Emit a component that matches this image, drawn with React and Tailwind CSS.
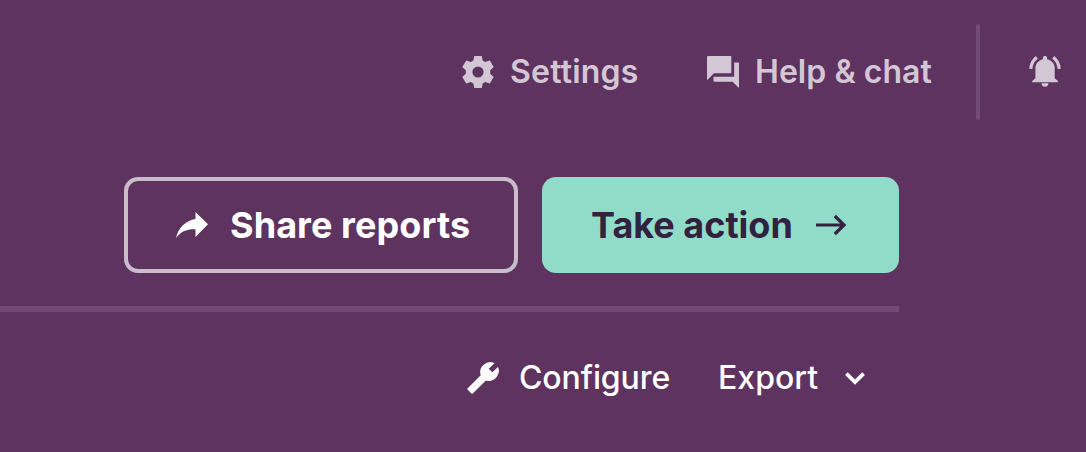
import React from "react";

function CogIcon() {
  return (
    <svg className="h-8 w-8 shrink-0" viewBox="0 0 32 32" fill="currentColor">
      <path
        fillRule="evenodd"
        d="M12.300 0h7.400l1 4.500 2.500 1.500 4.600-1.600L31.700 11 28.200 14.200v3.600L31.700 21 27.800 27.600 23.200 26l-2.500 1.500-1 4.500h-7.400l-1-4.500L8.800 26l-4.600 1.600L.3 21l3.500-3.200v-3.600L.3 11l3.900-6.600L8.800 6l2.500-1.500zM16 10.400a5.600 5.600 0 1 0 0 11.200a5.600 5.600 0 0 0 0-11.200z"
      />
    </svg>
  );
}

function ChatIcon() {
  return (
    <svg className="h-8 w-8 shrink-0" viewBox="0 0 32 32" fill="currentColor">
      <path d="M1 0h22.500q.8 0 .8.800v15.700q0 .8-.8.800H7L0 24.300V1q0-1 1-1z" />
      <path d="M27.200 6.500H31q1 0 1 1V32l-6.300-6.300H7.500q-1 0-1-1v-3.900h20.700z" />
    </svg>
  );
}

function BellIcon() {
  return (
    <svg className="h-8 w-8 shrink-0" viewBox="0 0 32 32" fill="currentColor">
      <path d="M13.900 2a2.100 2.100 0 0 1 4.200 0v1.300c4.800 1 7.600 4.700 7.600 9.200V22.200l3.200 2.800V26.200H3.200v-1.200L6.400 22.200v-9.700c0-4.500 2.800-8.200 7.500-9.200zM12.600 27.300h6.800a3.400 3.400 0 0 1-6.800 0z" />
      <path
        d="M7.800 1.400Q2.300 5.500 1.800 12.800M24.200 1.400Q29.700 5.500 30.200 12.800"
        fill="none"
        stroke="currentColor"
        strokeWidth="3.200"
      />
    </svg>
  );
}

function ShareIcon() {
  return (
    <svg className="h-8 w-8 shrink-0" viewBox="0 0 32 32" fill="currentColor">
      <path d="M19.500 3 32 15.300 19.500 28v-7.800C10 20 5 22.500 0 29 2.500 18.500 9.500 11.500 19.500 10z" />
    </svg>
  );
}

function ArrowIcon() {
  return (
    <svg className="h-8 w-8 shrink-0" viewBox="0 0 32 32" fill="none" stroke="currentColor" strokeWidth="3.200">
      <path d="M0 16h28M18.800 7 28 16l-9.200 9" />
    </svg>
  );
}

function WrenchIcon() {
  return (
    <svg className="h-8 w-8 shrink-0" viewBox="0 0 32 32" fill="currentColor">
      <path d="M27.600 1.200A10 10 0 0 0 13.700 13.200L.5 26.400q-.6.600 0 1.200l4 4q.6.600 1.200 0L18.900 18.400A10 10 0 0 0 31 4.900L25.300 10.300 21.700 6.800z" />
    </svg>
  );
}

function ChevronIcon() {
  return (
    <svg className="h-5 w-5 shrink-0" viewBox="0 0 20 20" fill="none" stroke="currentColor" strokeWidth="3.700">
      <path d="M1.400 5.600 10 14.100l8.600-8.500" />
    </svg>
  );
}

export default function App() {
  return (
    <main className="h-[452px] w-[1086px] overflow-hidden bg-[#5e3360] font-['Inter',sans-serif] text-white">
      <header className="flex h-36 items-center justify-end pr-[25px] text-[32px] leading-10 font-semibold text-[#d4c7d5]">
        <a className="flex w-[177px] items-center gap-4 whitespace-nowrap">
          <CogIcon />
          <span className="tracking-[0.2px]">Settings</span>
        </a>
        <a className="ml-[68px] flex w-[225px] items-center gap-4 whitespace-nowrap">
          <ChatIcon />
          <span className="tracking-[0.04px]">Help &amp; chat</span>
        </a>
        <span className="ml-[44px] h-24 w-1 rounded-full bg-[#714b73]" />
        <span className="ml-[49px]">
          <BellIcon />
        </span>
      </header>
      <section className="w-[899px]">
        <div className="flex justify-end gap-6 pt-[33px] pb-[33px] text-[36px] font-bold">
          <button className="flex h-24 w-[394px] items-center gap-[22px] rounded-[14px] border-4 border-[#cabdcb] pl-12 whitespace-nowrap">
            <ShareIcon />
            <span className="tracking-[0.08px]">Share reports</span>
          </button>
          <button className="flex h-24 w-[357px] items-center gap-[23px] rounded-[14px] bg-[#91dcc8] pl-[49px] whitespace-nowrap text-[#32213f]">
            <span>Take action</span>
            <ArrowIcon />
          </button>
        </div>
        <div className="h-1.5 bg-[#714b73]" />
        <div className="flex h-[132px] items-center justify-end pr-[34px] text-[32px] font-medium">
          <button className="flex w-[203px] items-center gap-5 whitespace-nowrap">
            <WrenchIcon />
            <span className="tracking-[-0.1px]">Configure</span>
          </button>
          <button className="ml-[48px] flex w-[147px] items-center justify-between whitespace-nowrap">
            <span>Export</span>
            <ChevronIcon />
          </button>
        </div>
      </section>
    </main>
  );
}
